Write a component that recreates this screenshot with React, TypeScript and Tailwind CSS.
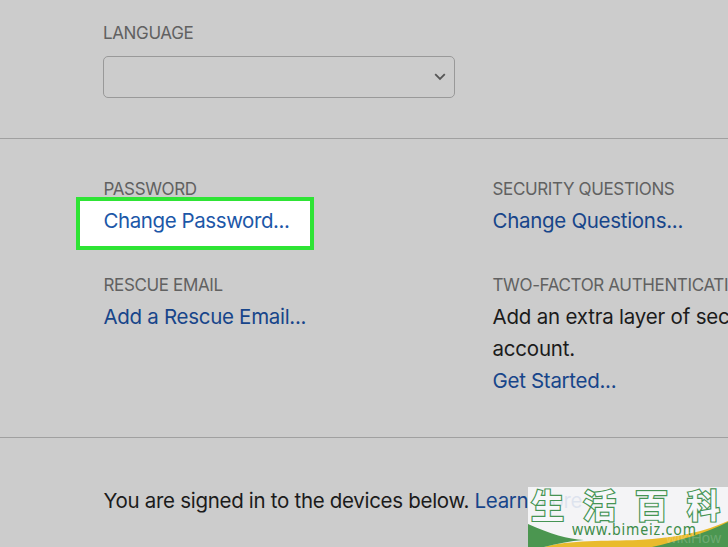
interface FieldProps {
  label: string;
  text?: string;
  link: string;
  highlighted?: boolean;
}

function Label({ children }: { children: string }) {
  return (
    <div className="h-8 whitespace-nowrap text-[17px] leading-8 tracking-[-0.36px] text-[#616161]">
      {children}
    </div>
  );
}

function Field({ label, text, link, highlighted }: FieldProps) {
  return (
    <div className="relative h-24">
      {highlighted && (
        <div className="absolute top-[24px] -left-[27.5px] h-[53px] w-[238px] border-4 border-[#2ee435] bg-white" />
      )}
      <div className="relative">
        <Label>{label}</Label>
        {text && <p className="w-[375px] tracking-[-0.2px] text-[#1b1b1b]">{text}</p>}
        <a className={`whitespace-nowrap ${highlighted ? 'tracking-[-0.42px] text-[#1c57a8]' : 'text-[#17458a]'}`}>
          {link}
        </a>
      </div>
    </div>
  );
}

function Watermark() {
  return (
    <div className="absolute top-[487px] left-[528px] h-[60px] w-[200px] overflow-hidden bg-[#f9f9fc]/88">
      <svg className="absolute inset-0" width="200" height="60" viewBox="0 0 200 60">
        <path d="M16 60 C40 53 80 54 110 53 C150 51 178 44 200 34 V60 Z" fill="#e9bb2c" />
        <path d="M0 37 C22 47 40 52 56 53 C42 54 28 57 16 60 H0 Z" fill="#4b9650" />
        <path d="M124 60 C150 54 178 46 200 35 V60 Z" fill="#4b9650" />
      </svg>
      <div className="absolute -top-[2px] left-[3px] flex gap-[19px] font-['Noto_Sans_CJK_SC',sans-serif] text-[33px] leading-[38px] font-bold tracking-normal text-[#f7f7fa] [-webkit-text-stroke:2.4px_#459454] [paint-order:stroke_fill]">
        <span>生</span>
        <span>活</span>
        <span>百</span>
        <span>科</span>
      </div>
      <div className="absolute top-[33px] left-[44px] origin-left scale-x-[0.89] font-['Noto_Sans',sans-serif] text-[16px] leading-[18px] font-normal tracking-[0.9px] text-[#3d8c49]">
        www.bimeiz.com
      </div>
      <div className="absolute top-[42px] left-[138px] font-['Liberation_Sans',sans-serif] text-[15px] leading-[18px] tracking-normal text-white/20">
        wikiHow
      </div>
    </div>
  );
}

export default function App() {
  return (
    <div className="relative h-[547px] w-[728px] overflow-hidden bg-[#cccccc] font-['Inter',sans-serif] text-[20.5px] leading-8 tracking-[-0.3px] text-[#1b1b1b]">
      <section className="h-[139px] border-b border-[#a0a0a0] pt-[17px] pl-[103px]">
        <Label>LANGUAGE</Label>
        <div className="mt-[7px] flex h-[42px] w-[352px] items-center justify-end rounded-[5px] border border-[#999999] pr-[8px] pb-px">
          <svg width="12" height="8" viewBox="0 0 12 8" fill="none" stroke="#555555" strokeWidth="1.8">
            <path d="M1.2 1.2 L6 6 L10.8 1.2" />
          </svg>
        </div>
      </section>
      <section className="grid h-[299px] grid-cols-[389px_389px] content-start border-b border-[#a0a0a0] pt-[34px] pl-[103.5px]">
        <Field label="PASSWORD" link="Change Password..." highlighted />
        <Field label="SECURITY QUESTIONS" link="Change Questions..." />
        <Field label="RESCUE EMAIL" link="Add a Rescue Email..." />
        <Field
          label="TWO-FACTOR AUTHENTICATION"
          text="Add an extra layer of security to your account."
          link="Get Started..."
        />
      </section>
      <section className="pt-[47px] pl-[103.5px] whitespace-nowrap">
        You are signed in to the devices below. <a className="text-[#17458a]">Learn more</a>
      </section>
      <Watermark />
    </div>
  );
}
